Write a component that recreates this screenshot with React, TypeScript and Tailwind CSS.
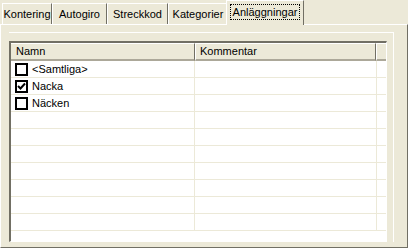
import React from "react";

const font = { fontFamily: '"Liberation Sans", Arial, sans-serif' };

function Tab({ label, w, selected }: { label: string; w: number; selected?: boolean }) {
  if (selected) {
    return (
      <div
        className="relative z-10 -mb-px -ml-[2px] flex h-[25px] items-start justify-center border-l border-t border-r border-l-white border-t-white border-r-[#716F64] bg-[#ECE9D8] pt-[3px]"
        style={{ width: w }}
      >
        <span className="border border-dotted border-black px-[2px] leading-[14px]">{label}</span>
      </div>
    );
  }
  return (
    <div
      className="flex h-[21px] items-start justify-center border-l border-t border-r border-l-white border-t-white border-r-[#716F64] pt-[3px] leading-[14px]"
      style={{ width: w }}
    >
      {label}
    </div>
  );
}

function Check({ checked }: { checked?: boolean }) {
  return (
    <div className="flex h-[13px] w-[13px] items-center justify-center border-2 border-black bg-white">
      {checked && (
        <svg width="9" height="9" viewBox="0 0 9 9">
          <path d="M1 4 L3.5 6.5 L8 1.5" stroke="black" strokeWidth="2" fill="none" />
        </svg>
      )}
    </div>
  );
}

const rows: { name?: string; checked?: boolean }[] = [
  { name: "<Samtliga>" },
  { name: "Nacka", checked: true },
  { name: "Näcken" },
  {},
  {},
  {},
  {},
  {},
  {},
  {},
];

export default function App() {
  return (
    <div className="flex h-[248px] w-[408px] flex-col bg-[#ECE9D8] text-[11px] text-black" style={font}>
      <div className="flex h-[24px] items-end pl-[2px]">
        <Tab label="Kontering" w={50} />
        <Tab label="Autogiro" w={55} />
        <Tab label="Streckkod" w={61} />
        <Tab label="Kategorier" w={60} />
        <Tab label="Anläggningar" w={78} selected />
      </div>
      <div className="flex flex-1 flex-col border-l border-t border-r border-b border-l-white border-t-white border-r-[#716F64] border-b-[#716F64] pb-[5px] pl-[8px] pr-[13px] pt-[7px]">
        <div className="flex flex-1 flex-col border-t border-r border-t-white border-r-white pr-[6px] pt-[8px]">
          <div className="flex flex-1 flex-col border-l-2 border-t-2 border-b border-r border-l-[#716F64] border-t-[#716F64] border-b-white border-r-white bg-white">
            <div className="flex h-[18px] bg-[#ECE9D8]">
              <div className="flex w-[184px] items-center border-t border-t-white border-b-2 border-b-[#ACA899] border-r border-r-[#716F64] pl-[5px]">
                Namn
              </div>
              <div className="flex w-[181px] items-center border-l border-l-white border-t border-t-white border-b-2 border-b-[#ACA899] border-r border-r-[#716F64] pl-[4px]">
                Kommentar
              </div>
              <div className="flex-1 border-l border-l-white border-t border-t-white border-b-2 border-b-[#ACA899]" />
            </div>
            <div className="flex flex-1 flex-col overflow-hidden">
              {rows.map((r, i) => (
                <div key={i} className="flex h-[17px] shrink-0 border-b border-b-[#ECE9D8]">
                  <div className="flex w-[184px] items-center gap-[4px] border-r border-r-[#ECE9D8] pl-[4px]">
                    {r.name !== undefined && (
                      <>
                        <Check checked={r.checked} />
                        <span>{r.name}</span>
                      </>
                    )}
                  </div>
                  <div className="w-[182px] border-r border-r-[#ECE9D8]" />
                  <div className="flex-1" />
                </div>
              ))}
            </div>
          </div>
        </div>
      </div>
    </div>
  );
}
